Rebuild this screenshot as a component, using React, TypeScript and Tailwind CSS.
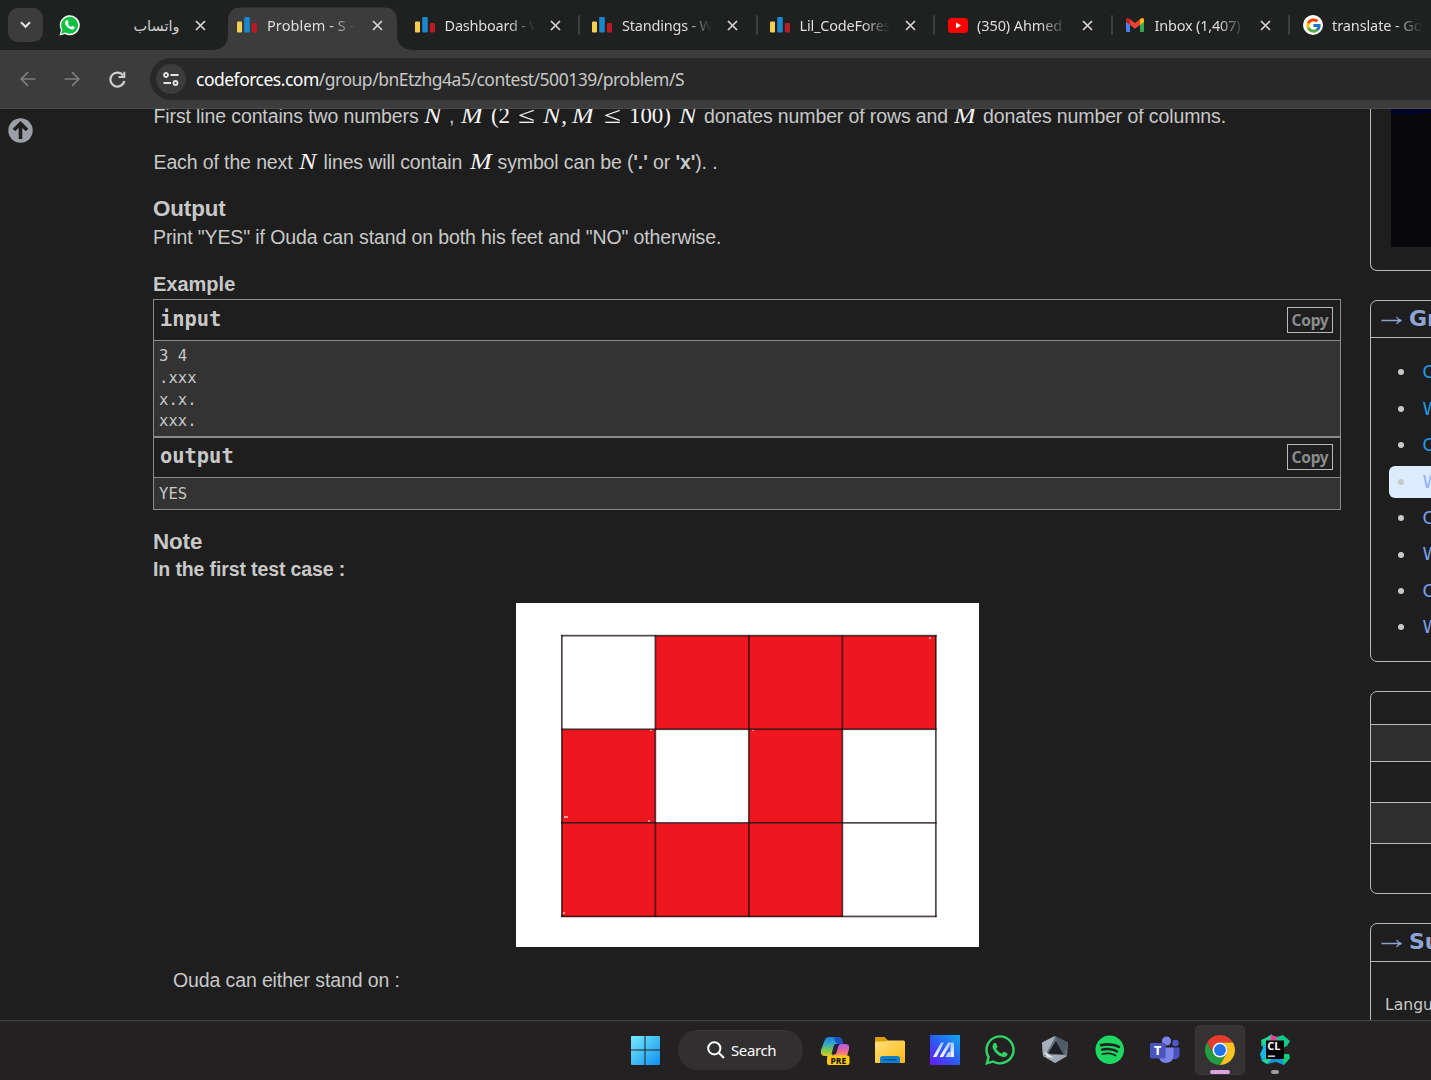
import React from 'react';
import { FaWhatsapp, FaSpotify } from 'react-icons/fa';
import { FcGoogle } from 'react-icons/fc';

const CfIcon = () => (
  <svg className="-ml-px" width="20" height="16" viewBox="0 0 20 16">
    <rect x="0" y="4.5" width="5" height="11" rx="1" fill="#f7cd52" />
    <rect x="7.2" y="0" width="5.6" height="15.5" rx="1" fill="#1a86cb" />
    <rect x="14.8" y="6" width="5.2" height="9.5" rx="1" fill="#b71c24" />
  </svg>
);

const WhatsAppTab = () => (
  <svg className="-ml-[1.5px]" width="21" height="21" viewBox="0 0 21 21">
    <path d="M0.5 20.5 2 15A10 10 0 1 1 6 19Z" fill="#fff" />
    <path d="M2 19 3.4 14.8A8.5 8.5 0 1 1 6.3 17.6Z" fill="#12c143" />
    <path d="M7.3 5.4c.6-.6 1.2-.4 1.5.3l.7 1.6c.2.5-.5 1-.8 1.5.8 1.6 1.8 2.5 3.4 3.2.5-.5.9-1.3 1.5-1l1.7.8c.9.5.1 1.9-.7 2.5-2.8 1.6-8.8-3.5-8.6-6.5 0-1 .5-1.7 1.3-2.4Z" fill="#fff" />
  </svg>
);

const YoutubeIcon = () => (
  <svg width="20" height="15" viewBox="0 0 20 15">
    <rect width="20" height="15" rx="3.5" fill="#f00" />
    <path d="M8 4.5 13.2 7.5 8 10.3Z" fill="#fff" />
  </svg>
);

const GmailIcon = () => (
  <svg width="18" height="14" viewBox="0 0 18 14">
    <path d="M0 3h4v11H1.2A1.2 1.2 0 0 1 0 12.8Z" fill="#4285f4" />
    <path d="M14 3h4v9.8a1.2 1.2 0 0 1-1.2 1.2H14Z" fill="#34a853" />
    <path d="M14 7V1.2L15 .4C16.3-.6 18 .2 18 1.8V4Z" fill="#fbbc04" />
    <path d="M4 7V1.2l5 3.8 5-3.8V7l-5 3.8Z" fill="#ea4335" />
    <path d="M0 1.8V4l4 3V1.2L3 .4C1.7-.6 0 .2 0 1.8Z" fill="#c5221f" />
  </svg>
);

const GoogleIcon = () => (
  <span className="flex size-5 items-center justify-center rounded-full bg-white">
    <FcGoogle size={17} />
  </span>
);

const CloseIcon = () => (
  <svg className="shrink-0" width="11" height="11" viewBox="0 0 11 11">
    <path d="M1 1 10 10M10 1 1 10" stroke="#d4d4d4" strokeWidth="1.7" fill="none" />
  </svg>
);

type TabProps = { icon: React.ReactNode; title: string; active?: boolean; sep?: boolean; rtl?: boolean; track?: string };

const Tab = ({ icon, title, active, sep, rtl, track = '' }: TabProps) => (
  <div className="relative flex h-[50px] w-[177.5px] shrink-0 items-center pl-[13px]">
    {active && (
      <svg className="absolute -left-[13px] top-[7px]" width="201" height="43" viewBox="0 0 201 43">
        <path d="M0 43Q16 42 16 28V14Q16 .5 29 .5H172Q185 .5 185 14V28Q185 42 201 43Z" fill="#3c3c3c" />
      </svg>
    )}
    <span className="relative flex w-[21px] shrink-0 justify-start">{icon}</span>
    <span
      dir={rtl ? 'rtl' : 'ltr'}
      className={`relative ml-[8px] w-[90px] shrink-0 overflow-hidden whitespace-nowrap font-['Noto_Sans','DejaVu_Sans',sans-serif] text-[14.5px] leading-6 ${track} ${
        rtl ? 'text-[#cfcfcf]' : 'text-[#dedede] [mask-image:linear-gradient(to_right,black_70%,transparent_100%)]'
      }`}
    >
      {title}
    </span>
    <span className="relative ml-[15px] flex">
      <CloseIcon />
    </span>
    {sep && <span className="absolute right-0 top-[15px] h-5 w-[2px] rounded bg-[#3f4140]" />}
  </div>
);

const M = ({ children, w }: { children: React.ReactNode; w: string }) => (
  <span className={`inline-block whitespace-nowrap font-['Liberation_Serif',serif] text-[23px] leading-6 text-[#f4f4f4] ${w}`}>{children}</span>
);

const V = ({ children }: { children: string }) => <i className="inline-block origin-left -translate-x-px scale-x-[1.13]">{children}</i>;

const Leq = () => <span className="inline-block origin-left scale-x-[1.35]">≤</span>;

const T = ({ children, w }: { children: React.ReactNode; w: string }) => <span className={`inline-block whitespace-nowrap ${w}`}>{children}</span>;

const SampleHead = ({ name, h }: { name: string; h: string }) => (
  <div className={`flex justify-between pl-[6px] pr-[7px] pt-[7px] ${h}`}>
    <span className="font-['DejaVu_Sans_Mono',monospace] text-[20.4px] font-bold leading-[25px]">{name}</span>
    <span className="flex h-[26px] w-[46px] items-center justify-center border border-[#b9b9b9] pb-[1px] font-['Noto_Sans',sans-serif] text-[15.5px] font-bold tracking-[-0.3px] text-[#8c8c8c]">
      Copy
    </span>
  </div>
);

const cells = ['.xxx', 'x.x.', 'xxx.'];

const Board = () => (
  <svg className="block" width="463" height="344" viewBox="0 0 463 344">
    <rect width="463" height="344" fill="#fff" />
    {cells.map((row, r) =>
      row.split('').map((c, k) => <rect key={`${r}-${k}`} x={46 + k * 93.5} y={32.8 + r * 93.7} width="93.5" height="93.7" fill={c === 'x' ? '#ee161f' : '#fff'} />),
    )}
    {[0, 1, 2, 3, 4].map((k) => (
      <rect key={k} x={45 + k * 93.5} y="32" width="1.7" height="282" fill="#1a0a0a" fillOpacity=".75" />
    ))}
    {[0, 1, 2, 3].map((k) => (
      <rect key={k} x="45" y={31.8 + k * 93.6} width="375.7" height="1.7" fill="#1a0a0a" fillOpacity=".75" />
    ))}
    <g fill="#f59a9e">
      <rect x="413" y="34" width="2" height="2" />
      <rect x="134" y="127" width="2" height="1" />
      <rect x="236" y="127" width="2" height="1" />
      <rect x="48" y="213" width="4" height="2" />
      <rect x="132" y="217" width="2" height="2" />
      <rect x="47" y="309" width="2" height="2" />
    </g>
  </svg>
);

const SideTitle = ({ children, h }: { children: string; h: string }) => (
  <div className={`flex items-center border-b border-[#b9b9b9] pb-[2px] pl-[10px] text-[22px] font-bold text-[#90a4d4] ${h}`}>
    <svg className="mr-[7px] mt-[3px] shrink-0" width="21" height="10" viewBox="0 0 21 10">
      <path d="M.5 5.5H20M15.5 2Q17.5 5 20.5 5.5Q17.5 6 15.5 9" stroke="#90a4d4" strokeWidth="1.3" fill="none" />
    </svg>
    {children}
  </div>
);

const links = [
  ['Contest', 'text-[#1e9fe8]'],
  ['Week', 'text-[#1e9fe8]'],
  ['Contest', 'text-[#1e9fe8]'],
  ['Week', 'text-[#8fb0ff]'],
  ['Contest', 'text-[#7ba2f0]'],
  ['Week', 'text-[#7ba2f0]'],
  ['Contest', 'text-[#7ba2f0]'],
  ['Week', 'text-[#7ba2f0]'],
];

const Sidebar = () => (
  <aside className="ml-[29px] flex w-[300px] shrink-0 flex-col font-['DejaVu_Sans',sans-serif]">
    <div className="h-[162px] shrink-0 rounded-b-[7px] border border-t-0 border-[#b9b9b9] pl-5">
      <div className="h-[138px] bg-[#08080a]">
        <svg className="block" width="279" height="6" viewBox="0 0 279 6">
          <path d="M0 0H279V2L40 4Q20 6 0 5.5Z" fill="#04042a" />
        </svg>
      </div>
    </div>
    <div className="mt-[29px] h-[362px] shrink-0 rounded-[7px] border border-[#b9b9b9]">
      <SideTitle h="h-[37px]">Groups</SideTitle>
      <ul className="mt-[16.2px] pl-[18px] text-[17.5px]">
        {links.map(([name, color], i) => (
          <li key={i} className="flex h-[36.45px] items-center">
            <span className={`flex h-8 w-full items-center rounded-[6px] pl-[9px] ${i === 3 ? 'bg-[#dcebfd]' : ''}`}>
              <span className="mr-[18.5px] size-[6px] rounded-full bg-[#c8c8c8]" />
              <span className={color}>{name}</span>
            </span>
          </li>
        ))}
      </ul>
    </div>
    <div className="mt-[29px] h-[203px] shrink-0 overflow-hidden rounded-[7px] border border-[#b9b9b9]">
      <div className="h-[33px] border-b border-[#b9b9b9]" />
      <div className="h-[37px] border-b border-[#b9b9b9] bg-[#2e2e2e]" />
      <div className="h-[41px] border-b border-[#b9b9b9]" />
      <div className="h-[41px] border-b border-[#b9b9b9] bg-[#2e2e2e]" />
    </div>
    <div className="mt-[29px] h-[203px] shrink-0 rounded-t-[7px] border border-[#b9b9b9]">
      <SideTitle h="h-[38px]">Submit?</SideTitle>
      <div className="mt-[31px] pl-[14px] text-[15.6px] leading-6">Language:</div>
    </div>
  </aside>
);

const Slot = ({ children, box = '' }: { children: React.ReactNode; box?: string }) => (
  <div className={`relative flex h-[50px] w-[50px] shrink-0 items-center justify-center ${box}`}>{children}</div>
);

const Taskbar = () => (
  <footer className="flex h-[60px] shrink-0 items-center gap-[5px] border-t border-[#454343] bg-[#232122] pb-[2px] pl-[620px]">
    <Slot>
      <svg width="30" height="30" viewBox="0 0 30 30">
        <defs>
          <linearGradient id="win" x1="0" y1="0" x2="30" y2="30" gradientUnits="userSpaceOnUse">
            <stop offset="0" stopColor="#7bedff" />
            <stop offset="1" stopColor="#0f8fef" />
          </linearGradient>
        </defs>
        <path d="M1 2q0-1 1-1H14.500V14.500H1ZM15.500 1H29q1 0 1 1V14.500H15.500ZM1 15.500H14.500V30H2q-1 0-1-1ZM15.500 15.500H30V29q0 1-1 1H15.500Z" fill="url(#win)" />
      </svg>
    </Slot>
    <div className="ml-[3px] mr-[2px] flex h-10 w-[125px] shrink-0 items-center rounded-full border-t border-[#3b393a] bg-[#312f30] pl-[29px]">
      <svg className="shrink-0" width="18" height="18" viewBox="0 0 18 18">
        <circle cx="7.3" cy="7.3" r="6.1" fill="none" stroke="#fff" strokeWidth="2" />
        <path d="M11.7 11.7 17 17" stroke="#fff" strokeWidth="2.2" />
      </svg>
      <span className="ml-[6px] font-['Noto_Sans',sans-serif] text-[15px] tracking-[-0.4px] text-white">Search</span>
    </div>
    <Slot>
      <svg width="30" height="30" viewBox="0 0 30 30">
        <defs>
          <linearGradient id="cpa" x1="0" y1="0" x2="0" y2="1">
            <stop offset="0" stopColor="#1f7ee0" />
            <stop offset=".35" stopColor="#31a7c8" />
            <stop offset=".7" stopColor="#7cc84e" />
            <stop offset="1" stopColor="#e0c52c" />
          </linearGradient>
          <linearGradient id="cpb" x1="0" y1="0" x2="0" y2="1">
            <stop offset="0" stopColor="#b45ae8" />
            <stop offset=".6" stopColor="#ec6a93" />
            <stop offset="1" stopColor="#f79b4e" />
          </linearGradient>
        </defs>
        <path d="M9 2H18Q21 2 22 5L23 9H19Q16 9 15 12L12 21H5Q0 21 1 15L4 7Q5.500 2 9 2Z" fill="url(#cpa)" />
        <path d="M14 2H18Q21 2 22 5L23 9H18Q16 9 15 6Z" fill="#1b4fc4" />
        <path d="M20 9H25Q30 9 29 14L27 21H12L15 19 18 11Q18.500 9 20 9Z" fill="url(#cpb)" />
        <path d="M14 10 11.500 19H16L18.500 11Q19 9 21 9H16Q14.500 9 14 10Z" fill="#262340" />
        <rect x="7" y="20.500" width="22.500" height="9.500" rx="2" fill="#fbc913" />
        <text x="18.3" y="28.5" textAnchor="middle" fontFamily="Noto Sans, sans-serif" fontSize="8.5" fontWeight="800" fill="#1b1600">PRE</text>
      </svg>
    </Slot>
    <Slot>
      <svg width="30" height="28" viewBox="0 0 30 28">
        <defs>
          <linearGradient id="fol" x1="0" y1="0" x2="1" y2="1">
            <stop offset="0" stopColor="#ffdf7b" />
            <stop offset="1" stopColor="#fdb913" />
          </linearGradient>
        </defs>
        <path d="M0 2Q0 1 1 1H9.5L13 4.5V9H0Z" fill="#dd9c08" />
        <path d="M0 7Q0 5.5 1.5 5.5H10L13 4.5H28.5Q30 4.5 30 6V26Q30 27 29 27H1Q0 27 0 26Z" fill="url(#fol)" />
        <path d="M5 27V22.5Q5 20 7.5 20H22.5Q25 20 25 22.5V27Z" fill="#1180cb" />
        <rect x="8.5" y="23" width="13" height="1.6" rx=".8" fill="#07549a" />
      </svg>
    </Slot>
    <Slot>
      <svg width="30" height="30" viewBox="0 0 30 30">
        <defs>
          <linearGradient id="ma" x1="0" y1="1" x2="1" y2="0">
            <stop offset="0" stopColor="#6a17ff" />
            <stop offset=".5" stopColor="#2b5cf6" />
            <stop offset="1" stopColor="#08acf5" />
          </linearGradient>
          <linearGradient id="mb" x1="0" y1="1" x2="0" y2="0">
            <stop offset="0" stopColor="#fff" />
            <stop offset="1" stopColor="#a9bdfb" />
          </linearGradient>
        </defs>
        <rect width="30" height="30" fill="url(#ma)" />
        <path d="M3 22 11 7.5H14L6.5 22Z" fill="url(#mb)" />
        <path d="M9.5 22 18 7.5H21.5L13 22Z" fill="url(#mb)" />
        <path d="M20.5 7.5H24V22H20.5Z" fill="url(#mb)" />
        <path d="M18.5 17H20.5V22H15.5Z" fill="#c9d5ff" />
      </svg>
    </Slot>
    <Slot>
      <FaWhatsapp size={34} color="#2fd366" />
    </Slot>
    <Slot>
      <svg width="28" height="29" viewBox="0 0 28 29">
        <path d="M14 1 27 7.5 26 21 14 28 2 21 1 7.5Z" fill="#69737e" />
        <path d="M14 1 1 7.5 2 21 5 19 13 4Z" fill="#a7b0ba" />
        <path d="M14 1 27 7.5 23 20 16 5Z" fill="#4f5964" />
        <path d="M2 21 14 28 26 21 22 20H7Z" fill="#a0a8b2" />
        <path d="M15 5.500 22.5 19.500 7 18.500Z" fill="#1d2026" />
        <path d="M3 17 7 18.5 13 23 6 22Z" fill="#dbe0e6" />
      </svg>
    </Slot>
    <Slot>
      <FaSpotify size={29.5} color="#1ed760" />
    </Slot>
    <Slot>
      <svg width="30" height="28" viewBox="0 0 30 28">
        <circle cx="25.5" cy="7" r="3.2" fill="#5059c9" />
        <path d="M21 11.5H28.5Q29.5 11.5 29.5 12.5V18.5A5 5 0 0 1 21 22Z" fill="#4a52c0" />
        <circle cx="16.5" cy="5" r="4.6" fill="#7b83eb" />
        <path d="M10 11.5H22.5Q23.5 11.5 23.5 12.5V20A7.5 7.5 0 0 1 9 22Z" fill="#7b83eb" />
        <rect x="0" y="7" width="15.5" height="15.5" rx="1.5" fill="#4a54bd" />
        <text x="7.7" y="19" textAnchor="middle" fontFamily="Noto Sans, sans-serif" fontSize="12.5" fontWeight="800" fill="#fff">T</text>
      </svg>
    </Slot>
    <Slot box="rounded-[5px] border border-[#3a3839] bg-[#343233]">
      <svg width="30" height="30" viewBox="0 0 48 48">
        <path d="M24 12H44.78A24 24 0 0 0 3.21 12L13.61 30A12 12 0 0 1 24 12Z" fill="#e33b2e" />
        <path d="M34.39 30 24 48A24 24 0 0 1 3.21 12L13.61 30A12 12 0 0 0 34.39 30Z" fill="#249a41" />
        <path d="M34.39 30 24 48A24 24 0 0 0 44.78 12H24A12 12 0 0 1 34.39 30Z" fill="#fcc31e" />
        <circle cx="24" cy="24" r="12" fill="#fff" />
        <circle cx="24" cy="24" r="9.500" fill="#1f72e8" />
      </svg>
      <span className="absolute bottom-0 left-[14px] h-1 w-5 rounded-full bg-[#dba3dd]" />
    </Slot>
    <Slot>
      <svg width="30" height="31" viewBox="0 0 30 31">
        <path d="M1 6 6 4 12 0 14 10 8 28 2 27 0 20 3 14Z" fill="#18b6e0" />
        <path d="M11 1 18 3 17 8H9Z" fill="#e8409a" />
        <path d="M6 4 11 1 10 8 1 12 2 6Z" fill="#21d789" />
        <path d="M17 3 23 1 30 7 27 12 22 14 16 9Z" fill="#12c98a" />
        <path d="M20 20 29 20 30 24 24 31 17 27Z" fill="#0fd07a" />
        <path d="M7 24 22 24 24 31 16 28 7 30 1 26Z" fill="#1692d8" />
        <path d="M6 24 12 24 7 30 2 27Z" fill="#21d789" />
        <rect x="6" y="6.500" width="18" height="18.500" fill="#000" />
        <text x="7.3" y="16" fontFamily="Open Sans, sans-serif" fontSize="11" fontWeight="700" fill="#fff">CL</text>
        <rect x="8" y="21.500" width="7" height="1.300" fill="#fff" />
      </svg>
      <span className="absolute bottom-[1px] left-[21px] h-1 w-2 rounded-full bg-[#9a9a9a]" />
    </Slot>
  </footer>
);

export default function App() {
  return (
    <div className="flex h-[1080px] w-[1431px] flex-col overflow-hidden bg-[#1e1e1e] font-['Liberation_Sans',sans-serif] text-[#c8c8c8]">
      <header className="flex h-[50px] shrink-0 overflow-hidden bg-[#1f2120]">
        <div className="flex w-[47.5px] shrink-0 items-center pl-2">
          <span className="flex h-[34px] w-[35px] items-center justify-center rounded-[10px] bg-[#3c3c3c]">
            <svg width="11" height="8" viewBox="0 0 11 8">
              <path d="M1 1.300 5.500 5.800 10 1.300" fill="none" stroke="#e6e6e6" strokeWidth="2" />
            </svg>
          </span>
        </div>
        <Tab icon={<WhatsAppTab />} title="واتساب" rtl />
        <Tab icon={<CfIcon />} title="Problem - S - Codeforces" active track="tracking-[0.1px]" />
        <Tab icon={<CfIcon />} title="Dashboard - Week" sep track="tracking-[-0.2px]" />
        <Tab icon={<CfIcon />} title="Standings - Week" sep track="tracking-[-0.2px]" />
        <Tab icon={<CfIcon />} title="Lil_CodeForest" sep track="tracking-[-0.2px]" />
        <Tab icon={<YoutubeIcon />} title="(350) Ahmed" sep track="tracking-[-0.1px]" />
        <Tab icon={<GmailIcon />} title="Inbox (1,407)" sep track="tracking-[-0.2px]" />
        <Tab icon={<GoogleIcon />} title="translate - Google" track="tracking-[-0.1px]" />
      </header>

      <nav className="flex h-[59px] shrink-0 items-center border-b border-[#4a4a4a] bg-[#3c3c3c] pl-5">
        <svg className="shrink-0" width="16" height="16" viewBox="0 0 16 16">
          <path d="M15.5 8H1.5M8 1.2 1.2 8 8 14.8" fill="none" stroke="#7d7d7d" strokeWidth="1.7" />
        </svg>
        <svg className="ml-[28px] shrink-0" width="16" height="16" viewBox="0 0 16 16">
          <path d="M.5 8H14.5M8 1.2 14.8 8 8 14.8" fill="none" stroke="#7d7d7d" strokeWidth="1.7" />
        </svg>
        <svg className="ml-[29px] shrink-0" width="17" height="17" viewBox="0 0 17 17">
          <path d="M14 4.3A7 7 0 1 0 15.3 10" fill="none" stroke="#cfcfcf" strokeWidth="2.2" />
          <path d="M16.3 .8V7H9.5V5H14.3V.8Z" fill="#cfcfcf" />
        </svg>
        <div className="ml-6 flex h-[42px] flex-1 items-center rounded-l-full bg-[#282828] pl-[6px]">
          <span className="flex size-[30px] shrink-0 items-center justify-center rounded-full bg-[#3c3c3c]">
            <svg width="16" height="14" viewBox="0 0 16 14" fill="none" stroke="#e3e3e3" strokeWidth="1.8">
              <circle cx="3" cy="3" r="2" />
              <path d="M7.5 3H15.5M.5 11H8" />
              <circle cx="12.5" cy="11" r="2" />
            </svg>
          </span>
          <span className="ml-[10px] font-['Noto_Sans',sans-serif] text-[17.5px] tracking-[-0.5px] text-[#c7c7c7]">
            <span className="text-white">codeforces.com</span>/group/bnEtzhg4a5/contest/500139/problem/S
          </span>
        </div>
      </nav>

      <div className="flex min-h-0 flex-1 overflow-hidden">
        <div className="w-[153px] shrink-0 pl-2 pt-[8.5px]">
          <svg width="25" height="25" viewBox="0 0 25 25">
            <circle cx="12.5" cy="12.5" r="12.2" fill="#9c9fa5" />
            <path d="M12.5 21V6M6 12 12.5 5.5 19 12" fill="none" stroke="#1e1e1e" strokeWidth="3.6" />
          </svg>
        </div>
        <main className="w-[1188px] shrink-0 text-[19.5px] tracking-[-0.12px]">
          <p className="-mt-[5px] flex h-6 pl-[0.5px] leading-6">
            <T w="w-[271.5px]">First line contains two numbers</T>
            <M w="w-[24px]"><V>N</V></M>
            <T w="w-[13px]">,</T>
            <M w="w-[29px]"><V>M</V></M>
            <M w="w-[27px]">(2</M>
            <M w="w-[26px]"><Leq /></M>
            <M w="w-[29px]"><V>N</V><span className="pl-[2px]">,</span></M>
            <M w="w-[31px]"><V>M</V></M>
            <M w="w-[25px]"><Leq /></M>
            <M w="w-[51px]">100)</M>
            <M w="w-[24px]"><V>N</V></M>
            <T w="w-[251px]">donates number of rows and</T>
            <M w="w-[28px]"><V>M</V></M>
            <T w="w-[250px]">donates number of columns.</T>
          </p>
          <p className="mt-[22px] flex h-6 pl-[0.5px] leading-6">
            <T w="w-[146px]">Each of the next</T>
            <M w="w-[24px]"><V>N</V></M>
            <T w="w-[147px]">lines will contain</T>
            <M w="w-[27px]"><V>M</V></M>
            <T w="w-[230px]">symbol can be (<b>'.'</b> or <b>'x'</b>). .</T>
          </p>
          <h2 className="mt-[22px] h-[26px] text-[22.4px] font-bold leading-[26px]">Output</h2>
          <p className="mt-[3px] h-6 leading-6">Print "YES" if Ouda can stand on both his feet and "NO" otherwise.</p>
          <h3 className="mt-[23px] h-6 text-[20px] font-bold leading-6 tracking-normal">Example</h3>
          <section className="mt-[3px] border border-[#8a8a8a] font-['DejaVu_Sans_Mono',monospace] text-[15.6px] leading-[22px] tracking-normal">
            <SampleHead name="input" h="h-[40px]" />
            <pre className="h-[96px] border-t border-[#8a8a8a] bg-[#333333] pl-[5px] pt-[5px] font-['DejaVu_Sans_Mono',monospace] leading-[21.8px]">{'3 4\n.xxx\nx.x.\nxxx.'}</pre>
            <div className="border-t-2 border-[#8a8a8a]">
              <div className="-mt-px">
                <SampleHead name="output" h="h-[40px]" />
              </div>
            </div>
            <pre className="h-[32px] border-t border-[#8a8a8a] bg-[#333333] pl-[5px] pt-[5px] font-['DejaVu_Sans_Mono',monospace]">YES</pre>
          </section>
          <h2 className="mt-[19px] h-[26px] text-[22.4px] font-bold leading-[26px]">Note</h2>
          <p className="mt-[2px] h-6 font-bold leading-6">In the first test case :</p>
          <div className="ml-[363px] mt-[22px]">
            <Board />
          </div>
          <p className="ml-5 mt-[21px] h-6 leading-6">Ouda can either stand on :</p>
        </main>
        <Sidebar />
      </div>
      <Taskbar />
    </div>
  );
}
